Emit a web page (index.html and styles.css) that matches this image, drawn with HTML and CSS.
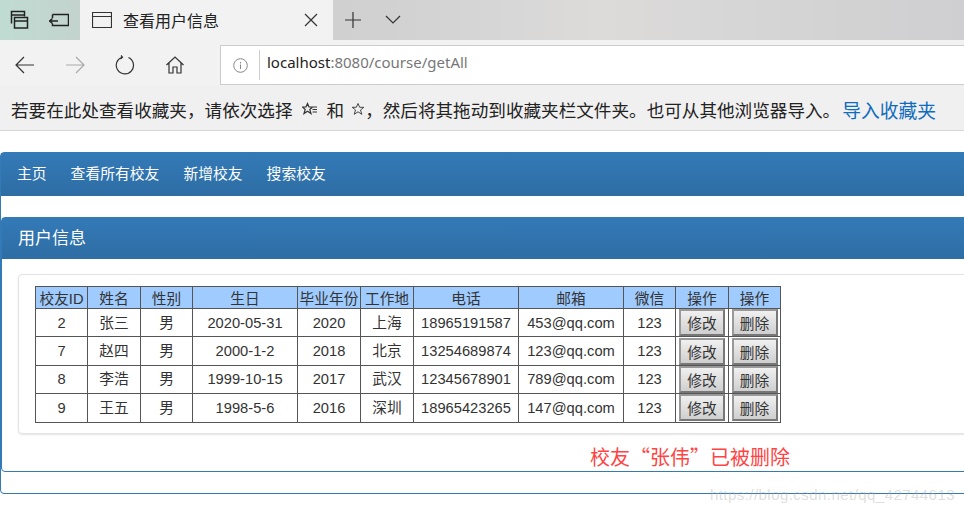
FILE: index.html
```html
<!DOCTYPE html>
<html lang="zh-CN">
<head>
    <meta charset="UTF-8">
    <title>查看用户信息</title>
    <link rel="stylesheet" href="styles.css">
</head>
<body>
    <div class="browser">
        <!-- Tab strip -->
        <div class="tab-strip">
            <div class="tab-tools">
                <svg class="icon dark" width="20" height="20" viewBox="0 0 20 20"><path d="M1.500 13.500V1.500H14.500V6.500M1.500 5H14.500" /><path d="M4.500 7.500H17.500V18H4.500ZM4.500 11H17.500" /></svg>
                <svg class="icon dark" width="20" height="20" viewBox="0 0 20 20"><path d="M3.500 4.500H19.500V15.500H3.500V13.500M3.500 8V4.500" /><path d="M.5 11H9M3.500 8.500L.5 11L3.500 13.500" /></svg>
            </div>
            <div class="tab">
                <svg class="icon" width="20" height="16" viewBox="0 0 20 16"><path d="M.5.5H19.500V15.500H.5ZM.5 4.500H19.500" /></svg>
                <span class="tab-title">查看用户信息</span>
                <svg class="icon tab-close" width="14" height="14" viewBox="0 0 14 14"><path d="M1 1L13 13M13 1L1 13" /></svg>
            </div>
            <svg class="icon tab-add" width="18" height="18" viewBox="0 0 18 18"><path d="M9 1V17M1 9H17" /></svg>
            <svg class="icon tab-more" width="16" height="10" viewBox="0 0 16 10"><path d="M1 1L8 8L15 1" /></svg>
        </div>

        <!-- Address bar -->
        <div class="toolbar">
            <svg class="icon nav-icon" width="20" height="18" viewBox="0 0 20 18"><path d="M19 9H1M9 1L1 9L9 17" /></svg>
            <svg class="icon nav-icon faded" width="20" height="18" viewBox="0 0 20 18"><path d="M1 9H19M11 1L19 9L11 17" /></svg>
            <svg class="icon nav-icon" width="20" height="20" viewBox="0 0 20 20"><path d="M7 2.200A8.600 8.600 0 1 0 13.500 2.500M6 .5L7.500 2.300L5.500 4" /></svg>
            <svg class="icon nav-icon" width="20" height="20" viewBox="0 0 20 20"><path d="M1.500 10L10 2L18.500 10M4 8V18H8V12H12V18H16V8" /></svg>
            <div class="address">
                <svg class="icon info" width="15" height="15" viewBox="0 0 15 15"><circle cx="7.500" cy="7.500" r="6.800" /><path d="M7.500 6.500V11M7.500 4V5.500" /></svg>
                <div class="address-field"><span class="address-text"><span class="host">localhost</span>:8080/course/getAll</span></div>
            </div>
        </div>

        <!-- Favourites hint -->
        <div class="fav-bar">
            <span>若要在此处查看收藏夹，请依次选择</span>
            <svg class="icon star-list" width="16" height="14" viewBox="0 0 16 14"><path d="M5.500 1.500L7 5H10.500L7.800 7.500L9 11.500L5.500 9.200L2 11.500L3.200 7.500L.5 5H4ZM10 5H15M10.500 7.500H15M10.500 10H15" /></svg>
            <span>和</span>
            <svg class="icon star" width="14" height="14" viewBox="0 0 14 14"><path d="M7 1.500L8.700 5.300H12.800L9.500 8L10.800 12.300L7 9.800L3.200 12.300L4.500 8L1.200 5.300H5.300Z" /></svg>
            <span class="fav-rest">，然后将其拖动到收藏夹栏文件夹。也可从其他浏览器导入。</span>
            <a href="#" class="fav-link">导入收藏夹</a>
        </div>

        <!-- Page -->
        <div class="page">
            <div class="panel outer-panel">
                <div class="main-nav">
                    <a href="#">主页</a>
                    <a href="#">查看所有校友</a>
                    <a href="#">新增校友</a>
                    <a href="#">搜索校友</a>
                </div>
                <div class="panel inner-panel">
                    <div class="panel-heading">用户信息</div>
                    <div class="panel-body">
                        <div class="well">
                            <table>
                                <colgroup>
                                    <col class="w52"><col class="w53"><col class="w52"><col class="w105"><col class="w63"><col class="w53"><col class="w105"><col class="w105"><col class="w52"><col class="w53"><col class="w52">
                                </colgroup>
                                <thead>
                                    <tr><th>校友ID</th><th>姓名</th><th>性别</th><th>生日</th><th>毕业年份</th><th>工作地</th><th>电话</th><th>邮箱</th><th>微信</th><th>操作</th><th>操作</th></tr>
                                </thead>
                                <tbody>
                                    <tr><td>2</td><td>张三</td><td>男</td><td>2020-05-31</td><td>2020</td><td>上海</td><td>18965191587</td><td>453@qq.com</td><td>123</td><td><button>修改</button></td><td><button>删除</button></td></tr>
                                    <tr><td>7</td><td>赵四</td><td>男</td><td>2000-1-2</td><td>2018</td><td>北京</td><td>13254689874</td><td>123@qq.com</td><td>123</td><td><button>修改</button></td><td><button>删除</button></td></tr>
                                    <tr><td>8</td><td>李浩</td><td>男</td><td>1999-10-15</td><td>2017</td><td>武汉</td><td>12345678901</td><td>789@qq.com</td><td>123</td><td><button>修改</button></td><td><button>删除</button></td></tr>
                                    <tr><td>9</td><td>王五</td><td>男</td><td>1998-5-6</td><td>2016</td><td>深圳</td><td>18965423265</td><td>147@qq.com</td><td>123</td><td><button>修改</button></td><td><button>删除</button></td></tr>
                                </tbody>
                            </table>
                        </div>
                        <p class="message">校友“张伟”已被删除</p>
                    </div>
                </div>
            </div>
        </div>

        <div class="watermark">https://blog.csdn.net/qq_42744613</div>
    </div>
</body>
</html>
```

FILE: styles.css
```css
* {
    margin: 0;
    padding: 0;
    box-sizing: border-box;
}

html, body {
    height: 100%;
    overflow: hidden;
    background-color: #fff;
}

body {
    font-family: "Liberation Sans", "Noto Sans CJK SC", sans-serif;
}

.browser {
    position: relative;
    width: 964px;
    height: 512px;
    overflow: hidden;
}

.icon {
    flex: none;
    fill: none;
    stroke: #333;
    stroke-width: 1.2;
}

.dark {
    stroke: #222;
    stroke-width: 1.5;
}

/* Tab strip */
.tab-strip {
    display: flex;
    align-items: center;
    height: 40px;
    background: linear-gradient(90deg, #c9c9cb 0%, #d2d1d2 40%, #dcdbda 62%, #cfced0 100%);
}

.tab-tools {
    display: flex;
    align-items: center;
    gap: 19px;
    width: 80px;
    height: 40px;
    padding-left: 10px;
    background: linear-gradient(90deg, #c0dcd2, #c3d3ce);
}

.tab {
    display: flex;
    align-items: center;
    width: 253px;
    height: 40px;
    padding: 0 15px 0 12px;
    background-color: #f2f2f2;
}

.tab-title {
    flex: 1;
    margin-left: 11px;
    font-size: 16px;
    color: #222;
}

.tab-add {
    margin-left: 11px;
}

.tab-more {
    margin-left: 23px;
}

/* Address bar */
.toolbar {
    display: flex;
    align-items: center;
    height: 45px;
    padding: 5px 0 0 15px;
    background-color: #f2f2f2;
}

.nav-icon {
    margin-right: 30px;
}

.faded {
    stroke: #aaa;
}

.address {
    display: flex;
    align-items: center;
    flex: 1;
    height: 40px;
    margin-left: 5px;
    border: 1px solid #ccc;
    border-right: 0;
    background-color: #fff;
}

.info {
    margin-left: 12px;
    stroke: #888;
    stroke-width: 1;
}

.address-field {
    height: 30px;
    margin-left: 11px;
    padding-left: 7px;
    border-left: 1px solid #ccc;
}

.address-text {
    display: block;
    font-family: "Noto Sans", sans-serif;
    font-size: 15px;
    line-height: 25px;
    color: #777;
}

.host {
    color: #222;
}

/* Favourites hint */
.fav-bar {
    display: flex;
    align-items: center;
    height: 46px;
    padding: 3px 0 0 11px;
    border-bottom: 1px solid #d6d6d6;
    background-color: #f0f0f0;
    font-size: 17.6px;
    color: #222;
}

.star-list {
    margin: 0 9px 0 9px;
}

.star {
    margin-left: 7px;
    stroke-width: .9;
}

.fav-link {
    margin-left: 2px;
    font-size: 18.800px;
    color: #0f6cbd;
    text-decoration: none;
}

/* Page */
.page {
    width: 1100px;
    padding-top: 21px;
}

.panel {
    border: 1px solid #337ab7;
    border-radius: 4px;
    background-color: #fff;
}

.outer-panel {
    height: 342px;
}

.main-nav {
    display: flex;
    gap: 24px;
    height: 43px;
    padding-left: 16px;
    background: linear-gradient(#337ab7, #2e6da4);
    font-size: 14.800px;
    line-height: 42px;
}

.main-nav a {
    color: #fff;
    text-decoration: none;
}

.inner-panel {
    margin-top: 21px;
    height: 255px;
}

.panel-heading {
    height: 41px;
    padding-left: 16px;
    background: linear-gradient(#337ab7, #2e6da4);
    font-size: 17px;
    line-height: 41px;
    color: #fff;
}

.panel-body {
    padding: 15px 0 0 16px;
}

.well {
    height: 160px;
    padding: 11px 16px;
    border: 1px solid #e3e3e3;
    border-radius: 4px;
    box-shadow: 0 1px 2px rgba(0, 0, 0, .1);
}

/* Alumni table */
table {
    table-layout: fixed;
    width: 746px;
    border-collapse: collapse;
    font-size: 14.700px;
    color: #333;
}

.w52 { width: 52px; }
.w53 { width: 53px; }
.w63 { width: 63px; }
.w105 { width: 105px; }

th, td {
    border: 1px solid #555;
    text-align: center;
    white-space: nowrap;
}

th {
    height: 22px;
    background-color: #9fcbff;
    font-weight: normal;
}

td {
    height: 28.400px;
    line-height: 20px;
}

button {
    display: block;
    width: 46px;
    height: 27px;
    margin: 0 auto;
    border: 2px solid #777;
    border-top-color: #999;
    border-left-color: #999;
    background: linear-gradient(#f0f0f0, #cfcfcf);
    font-family: inherit;
    font-size: 14.700px;
    color: #333;
}

.message {
    margin: 10px 0 0 572px;
    font-family: "Noto Sans CJK SC", sans-serif;
    font-size: 20px;
    line-height: 26px;
    color: #f44;
}

/* Image host stamp across the bottom corner */
.watermark {
    position: absolute;
    right: 9px;
    bottom: 9px;
    font-size: 15px;
    letter-spacing: .45px;
    color: rgba(170, 170, 170, .4);
}
```
